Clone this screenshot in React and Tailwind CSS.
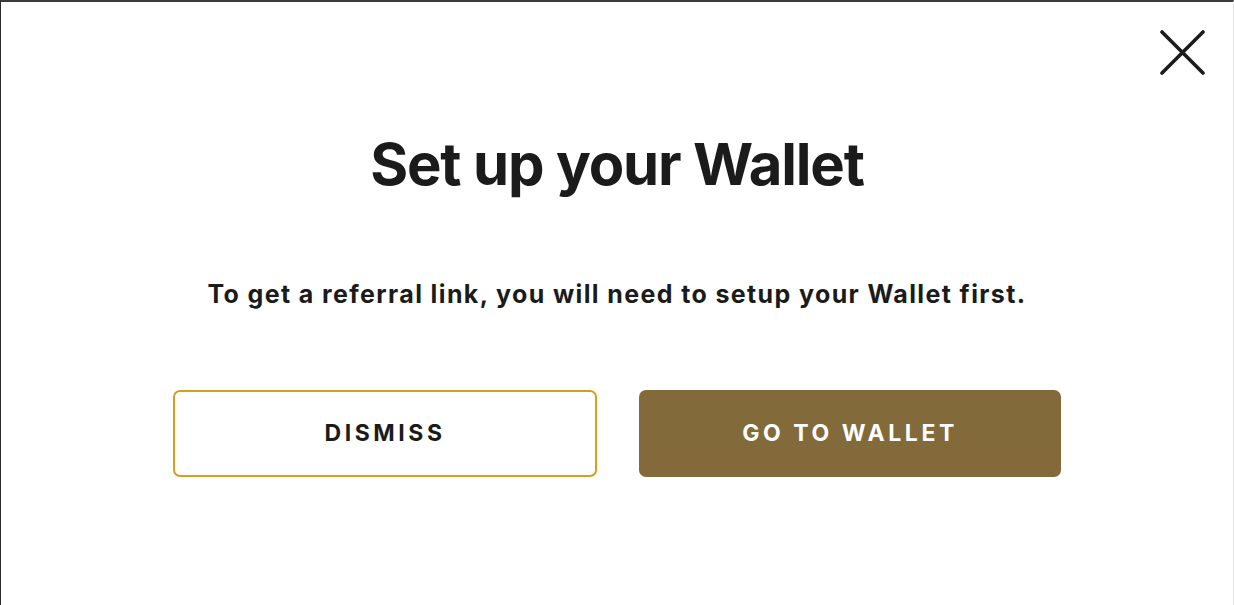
import React from 'react';

export default function App() {
  return (
    <div className="relative h-[605px] w-[1234px] overflow-hidden bg-white border-t-2 border-t-[#3a3a3a] border-l border-l-[#2b2b2b] border-r border-r-[#e3e3e3] font-['Inter',sans-serif] text-[#1b1b1b]">
      {/* Close */}
      <button className="absolute top-[28px] right-[28px] h-[45px] w-[45px]" aria-label="Close">
        <svg viewBox="0 0 45 45" className="h-full w-full" fill="none" stroke="#1b1b1b" strokeWidth="3.6" strokeLinecap="round">
          <path d="M2 2 L43 43 M43 2 L2 43" />
        </svg>
      </button>

      <div className="flex flex-col items-center pt-[133px]">
        <h1 className="text-[58px] font-bold leading-none tracking-[-0.02em]">Set up your Wallet</h1>
        <p className="mt-[89px] text-[25px] font-bold leading-none tracking-[0.055em]">
          To get a referral link, you will need to setup your Wallet first.
        </p>

        <div className="mt-[83px] flex gap-[42px]">
          <button className="h-[87px] w-[424px] rounded-[7px] border-2 border-[#d49f1e] bg-white text-[23px] font-bold tracking-[0.155em] text-[#1b1b1b]">
            DISMISS
          </button>
          <button className="h-[87px] w-[422px] rounded-[7px] bg-[#836a3a] text-[23px] font-bold tracking-[0.155em] text-white">
            GO TO WALLET
          </button>
        </div>
      </div>
    </div>
  );
}
